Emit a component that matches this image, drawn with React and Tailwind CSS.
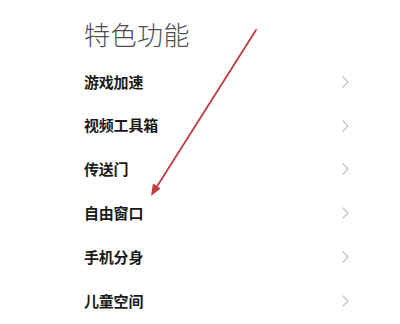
const items = ['游戏加速', '视频工具箱', '传送门', '自由窗口', '手机分身', '儿童空间']

function Chevron() {
  return (
    <svg width="7" height="12" viewBox="0 0 7 12" fill="none">
      <polyline points="1,1 6,6 1,11" stroke="#c4c4c4" strokeWidth="1.3" strokeLinecap="round" strokeLinejoin="round" />
    </svg>
  )
}

export default function App() {
  return (
    <div
      className="relative w-[400px] h-[324px] bg-white overflow-hidden"
      style={{ fontFamily: '"Noto Sans CJK SC", "Noto Sans", sans-serif' }}
    >
      <div className="pl-[84px] pr-[51px]">
        <h1 className="pt-[14px] h-[60px] text-[26px] leading-[40px] font-light text-[#4e4e4e] tracking-[0.5px]">
          特色功能
        </h1>
        <ul>
          {items.map(name => (
            <li key={name} className="flex items-center justify-between h-[43.8px]">
              <span className="text-[15px] font-bold text-[#1a1a1a] tracking-[-0.2px]">{name}</span>
              <Chevron />
            </li>
          ))}
        </ul>
      </div>

      {/* red annotation arrow */}
      <svg className="absolute inset-0 pointer-events-none" width="400" height="324" viewBox="0 0 400 324">
        <line x1="256" y1="30" x2="156" y2="188" stroke="#bf3b42" strokeWidth="1.8" strokeLinecap="round" />
        <polygon points="151,196 153,183.5 160.5,188.5" fill="#bf3b42" />
      </svg>
    </div>
  )
}
